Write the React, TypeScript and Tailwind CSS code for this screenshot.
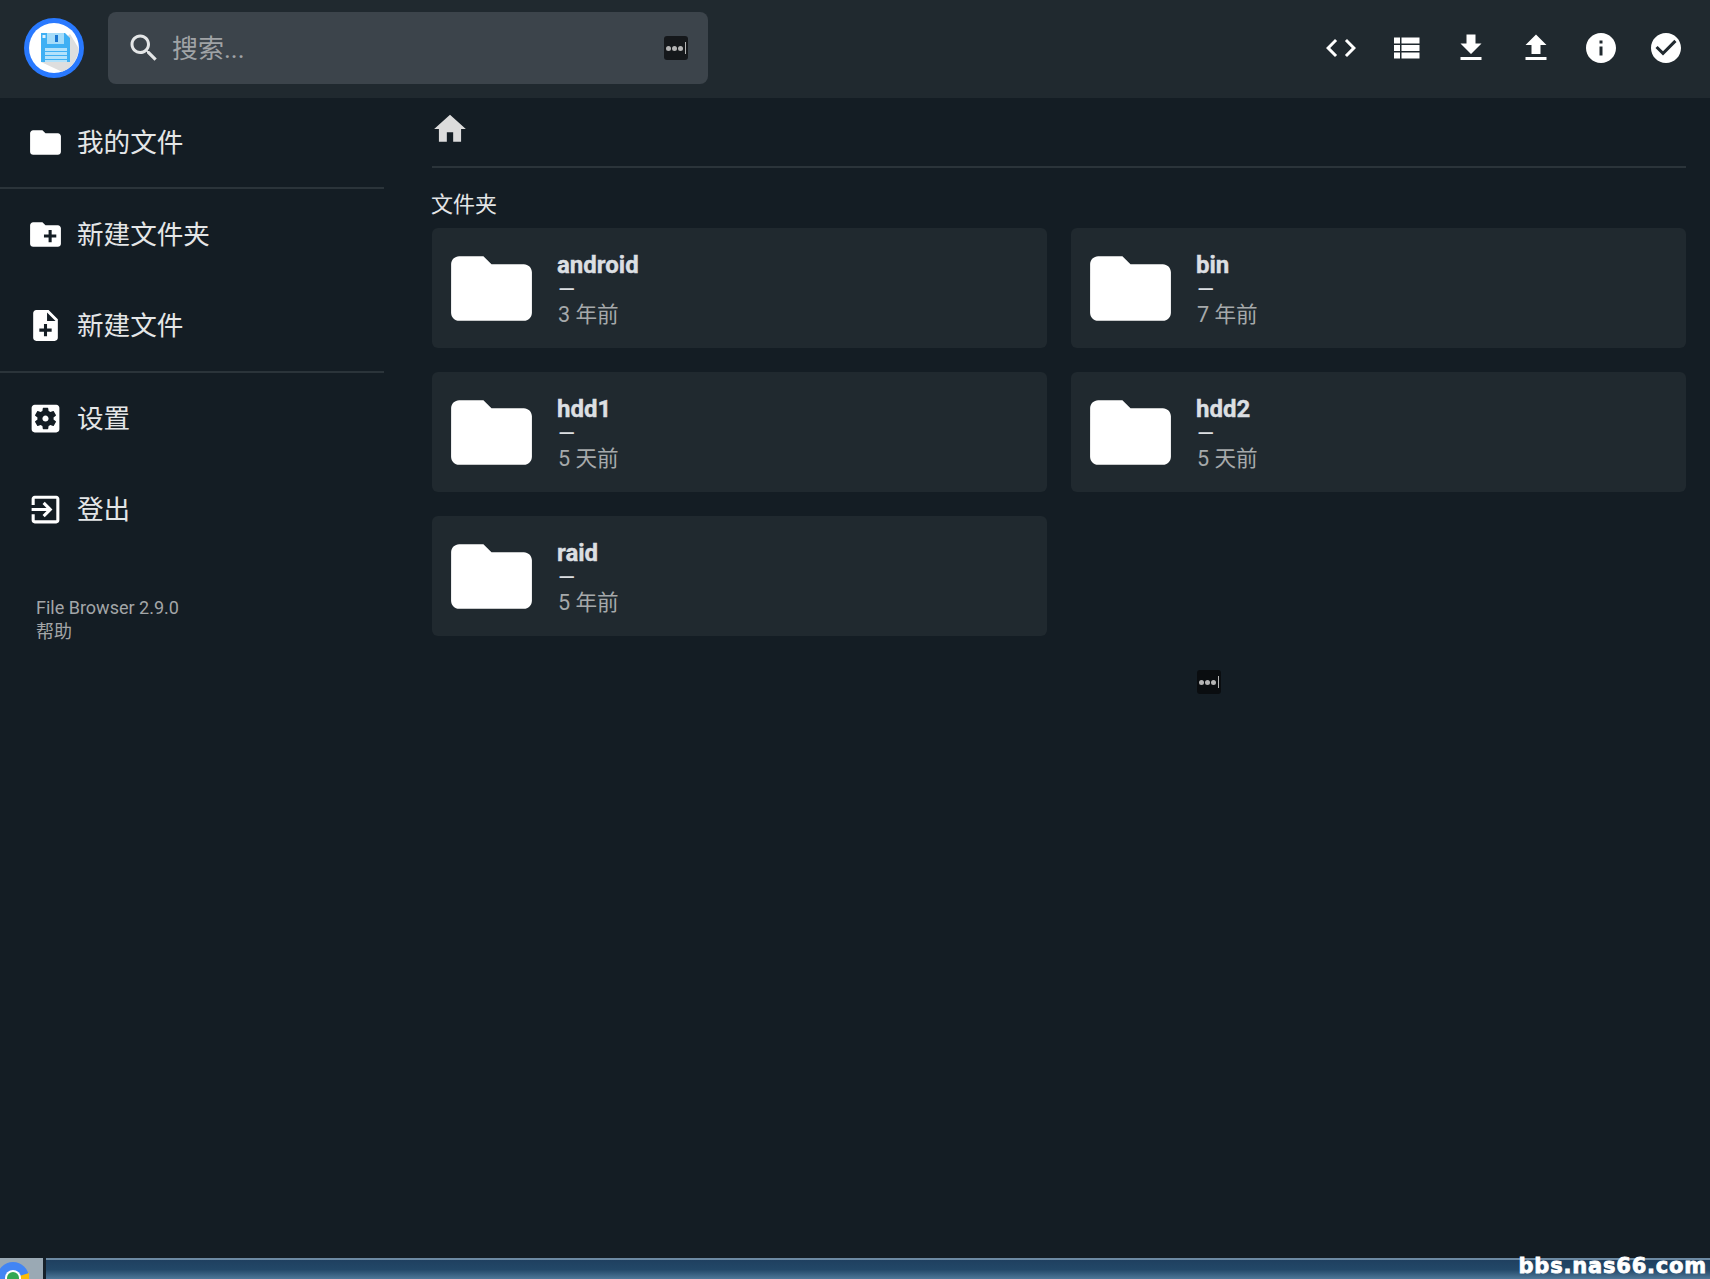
const FOLDER = 'M10 4H4c-1.1 0-1.99.9-1.99 2L2 18c0 1.1.9 2 2 2h16c1.1 0 2-.9 2-2V8c0-1.1-.9-2-2-2h-8l-2-2z'

function Icon({ d, className }: { d: string; className: string }) {
  return (
    <svg viewBox="0 0 24 24" fill="currentColor" className={className}>
      <path d={d} />
    </svg>
  )
}

function DotsBadge({ className }: { className: string }) {
  return (
    <div className={`flex items-center justify-center gap-[1px] rounded-[3px] ${className}`}>
      <span className="w-[5px] h-[5px] rounded-full bg-[#b5b5b5]" />
      <span className="w-[5px] h-[5px] rounded-full bg-[#b5b5b5]" />
      <span className="w-[5px] h-[5px] rounded-full bg-[#b5b5b5]" />
      <span className="w-[1px] h-[12px] ml-[1px] bg-[#b5b5b5]" />
    </div>
  )
}

function Logo() {
  return (
    <svg viewBox="0 0 60 60" className="w-[60px] h-[60px] shrink-0">
      <circle cx="30" cy="30" r="30" fill="#2979ff" />
      <circle cx="30" cy="30" r="25" fill="#ffffff" />
      <path d="M46 16 L54.5 30 A25 25 0 0 1 38 53.7 L17 44 Z" fill="#dedede" />
      <path d="M17 15 H41 L46 20 V44 H17 Z" fill="#3fb0f4" />
      <rect x="23" y="15" width="17" height="11" fill="#a5dcf9" />
      <rect x="31" y="17" width="3" height="7" fill="#1976d2" />
      <rect x="18.5" y="17" width="3" height="3" fill="#e3f2fd" />
      <rect x="21" y="30" width="22" height="14" fill="#b3e2fb" />
      <rect x="21" y="33" width="22" height="1" fill="#3fb0f4" />
      <rect x="21" y="37" width="22" height="1" fill="#3fb0f4" />
      <rect x="21" y="41" width="22" height="1" fill="#3fb0f4" />
    </svg>
  )
}

function ChromeLogo() {
  return (
    <svg viewBox="0 0 32 32" className="w-[32px] h-[32px] -ml-[3px] mt-[4px]">
      <circle cx="16" cy="16" r="16" fill="#4285f4" />
      <path d="M16 16 L32 11 A16 16 0 0 1 22 31 Z" fill="#fbbc05" />
      <path d="M16 16 L22 31 A16 16 0 0 1 2 24 Z" fill="#34a853" />
      <circle cx="16" cy="16" r="8" fill="#ffffff" />
      <circle cx="16" cy="16" r="6" fill="#34a853" />
    </svg>
  )
}

const actions = [
  'M9.4 16.6L4.8 12l4.6-4.6L8 6l-6 6 6 6 1.4-1.4zm5.2 0l4.6-4.6-4.6-4.6L16 6l6 6-6 6-1.4-1.4z',
  'M4 14h4v-4H4v4zm0 5h4v-4H4v4zM4 9h4V5H4v4zm5 5h12v-4H9v4zm0 5h12v-4H9v4zM9 5v4h12V5H9z',
  'M19 9h-4V3H9v6H5l7 7 7-7zM5 18v2h14v-2H5z',
  'M9 16h6v-6h4l-7-7-7 7h4v6zm-4 2h14v2H5z',
  'M12 2C6.48 2 2 6.48 2 12s4.48 10 10 10 10-4.48 10-10S17.52 2 12 2zm1 15h-2v-6h2v6zm0-8h-2V7h2v2z',
  'M12 2C6.48 2 2 6.48 2 12s4.48 10 10 10 10-4.48 10-10S17.52 2 12 2zm-2 15l-5-5 1.41-1.41L10 14.17l7.59-7.59L19 8l-9 9z',
]

function Header() {
  return (
    <header className="h-[98px] shrink-0 flex items-start pt-[12px] bg-[#20292f] pl-[24px] pr-[26px]">
      <div className="mt-[6px]">
        <Logo />
      </div>
      <div className="ml-[24px] w-[600px] h-[72px] flex items-center rounded-[8px] bg-[#3c444b] pl-[20px] pr-[20px]">
        <Icon
          d="M15.5 14h-.79l-.28-.27C15.41 12.59 16 11.11 16 9.5 16 5.91 13.09 3 9.5 3S3 5.91 3 9.5 5.91 16 9.5 16c1.61 0 3.09-.59 4.23-1.57l.27.28v.79l5 4.99L20.49 19l-4.99-5zm-6 0C7.01 14 5 11.99 5 9.5S7.01 5 9.5 5 14 7.01 14 9.5 11.99 14 9.5 14z"
          className="w-[36px] h-[36px] text-[#e4e6e7] shrink-0 -ml-[2px]"
        />
        <span className="ml-[10px] pt-[2px] text-[26px] text-[#a0a3a6]">搜索...</span>
        <DotsBadge className="ml-auto w-[24px] h-[24px] bg-[#15181b]" />
      </div>
      <div className="ml-auto mt-[18px] flex items-center gap-[29px] text-white">
        {actions.map((d) => (
          <Icon key={d} d={d} className="w-[36px] h-[36px]" />
        ))}
      </div>
    </header>
  )
}

const FILE_ADD = 'M14 2H6c-1.1 0-1.99.9-1.99 2L4 20c0 1.1.89 2 1.99 2H18c1.1 0 2-.9 2-2V8l-6-6zm2 14h-3v3h-2v-3H8v-2h3v-3h2v3h3v2zm-3-7V3.5L18.5 9H13z'
const FOLDER_ADD = 'M20 6h-8l-2-2H4c-1.11 0-1.99.89-1.99 2L2 18c0 1.11.89 2 2 2h16c1.11 0 2-.89 2-2V8c0-1.11-.89-2-2-2zm-1 8h-3v3h-2v-3h-3v-2h3V9h2v3h3v2z'
const SETTINGS = 'M12 10c-1.1 0-2 .9-2 2s.9 2 2 2 2-.9 2-2-.9-2-2-2zm7-7H5c-1.11 0-2 .9-2 2v14c0 1.1.89 2 2 2h14c1.11 0 2-.9 2-2V5c0-1.1-.89-2-2-2zm-1.75 9c0 .23-.02.46-.05.68l1.48 1.16c.13.11.17.3.08.45l-1.4 2.42c-.09.15-.27.21-.43.15l-1.74-.7c-.36.28-.76.51-1.18.69l-.26 1.85c-.03.17-.18.3-.35.3h-2.8c-.17 0-.32-.13-.35-.29l-.26-1.85c-.43-.18-.82-.41-1.18-.69l-1.74.7c-.16.06-.34 0-.43-.15l-1.4-2.42c-.09-.15-.05-.34.08-.45l1.48-1.16c-.03-.23-.05-.46-.05-.69 0-.23.02-.46.05-.68l-1.48-1.16c-.13-.11-.17-.3-.08-.45l1.4-2.42c.09-.15.27-.21.43-.15l1.74.7c.36-.28.76-.51 1.18-.69l.26-1.85c.03-.17.18-.3.35-.3h2.8c.17 0 .32.13.35.29l.26 1.85c.43.18.82.41 1.18.69l1.74-.7c.16-.06.34 0 .43.15l1.4 2.42c.09.15.05.34-.08.45l-1.48 1.16c.03.23.05.46.05.69z'
const LOGOUT = 'M10.09 15.59L11.5 17l5-5-5-5-1.41 1.41L12.67 11H3v2h9.67l-2.58 2.59zM19 3H5c-1.11 0-2 .9-2 2v4h2V5h14v14H5v-4H3v4c0 1.1.89 2 2 2h14c1.1 0 2-.9 2-2V5c0-1.1-.9-2-2-2z'

function NavItem({ d, label, first }: { d: string; label: string; first?: boolean }) {
  return (
    <div className={`${first ? 'h-[89px]' : 'h-[91px]'} flex items-center pl-[27px]`}>
      <Icon d={d} className="w-[37px] h-[37px] text-white shrink-0" />
      <span className="ml-[13px] pt-[1px] text-[26.6px] text-[#e4e6e7]">{label}</span>
    </div>
  )
}

function Sidebar() {
  return (
    <aside className="w-[384px] shrink-0">
      <NavItem d={FOLDER} label="我的文件" first />
      <div className="h-[2px] bg-[#2b343a]" />
      <NavItem d={FOLDER_ADD} label="新建文件夹" />
      <NavItem d={FILE_ADD} label="新建文件" />
      <div className="h-[2px] bg-[#2b343a]" />
      <NavItem d={SETTINGS} label="设置" />
      <NavItem d={LOGOUT} label="登出" />
      <div className="pl-[36px] pt-[41px] text-[18px] leading-[24px] text-[#a3a6a8]">
        <p>File Browser 2.9.0</p>
        <p>帮助</p>
      </div>
    </aside>
  )
}

const folders = [
  { name: 'android', time: '3 年前' },
  { name: 'bin', time: '7 年前' },
  { name: 'hdd1', time: '5 天前' },
  { name: 'hdd2', time: '5 天前' },
  { name: 'raid', time: '5 年前' },
]

function FolderCard({ name, time }: { name: string; time: string }) {
  return (
    <div className="h-[120px] flex items-center rounded-[6px] bg-[#20292f] pl-[11px]">
      <Icon d={FOLDER} className="w-[97px] h-[97px] text-white shrink-0" />
      <div className="ml-[17px] pt-[4px] flex flex-col">
        <span className="text-[24px] leading-[28px] font-bold text-[#dcdfe2] [-webkit-text-stroke:0.4px_#dcdfe2]">{name}</span>
        <span className="ml-[1px] text-[22px] leading-[22px] text-[#dcdfe2]">—</span>
        <span className="ml-[1px] text-[21.6px] leading-[28px] text-[#a6a9ab]">{time}</span>
      </div>
    </div>
  )
}

export default function App() {
  return (
    <div className="relative w-[1710px] h-[1279px] flex flex-col overflow-hidden bg-[#141d24] font-['Roboto','Noto_Sans_CJK_SC',sans-serif]">
      <Header />
      <div className="flex-1 flex min-h-0">
        <Sidebar />
        <main className="flex-1 pl-[48px] pr-[24px]">
          <div className="h-[70px] border-b-2 border-[#2b343a] pt-[12px]">
            <Icon d="M10 20v-6h4v6h5v-8h3L12 3 2 12h3v8z" className="w-[38px] h-[38px] text-[#dcdcdc] -ml-[1px]" />
          </div>
          <h2 className="mt-[21px] mb-[7px] -ml-[1px] text-[22px] leading-[32px] text-[#e4e6e7]">文件夹</h2>
          <div className="grid grid-cols-2 gap-6">
            {folders.map((f) => (
              <FolderCard key={f.name} name={f.name} time={f.time} />
            ))}
          </div>
        </main>
      </div>
      <DotsBadge className="absolute left-[1197px] top-[670px] w-[24px] h-[24px] bg-[#0a0d10]" />
      <footer className="h-[21px] shrink-0 flex border-t-2 border-[#6d8aa3] bg-gradient-to-b from-[#1f4060] via-[#234868] to-[#4f7899]">
        <div className="w-[46px] -mt-[2px] overflow-hidden border-r-[3px] border-[#16212b] bg-[#9aa9b4]">
          <ChromeLogo />
        </div>
      </footer>
      <span className="absolute right-[3px] bottom-[1px] text-[21px] leading-[24px] font-bold tracking-[0.8px] text-white font-['DejaVu_Sans',sans-serif] [-webkit-text-stroke:0.8px_#ffffff]">
        bbs.nas66.com
      </span>
    </div>
  )
}
